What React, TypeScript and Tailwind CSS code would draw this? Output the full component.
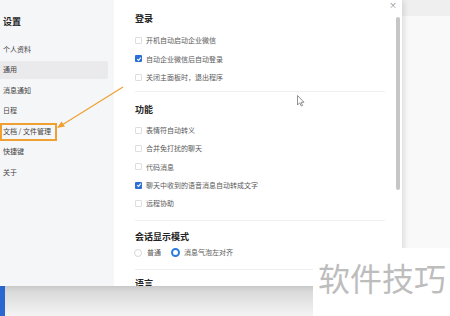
import React from 'react';

const font = { fontFamily: '"Noto Sans CJK SC", "Noto Sans", sans-serif' };

const navItems = ['个人资料', '通用', '消息通知', '日程', '文档 / 文件管理', '快捷键', '关于'];

function Check({ checked }: { checked?: boolean }) {
  if (checked) {
    return (
      <span className="flex h-[7px] w-[7px] items-center justify-center rounded-[1px] bg-[#2b6fd6]">
        <svg width="6" height="6" viewBox="0 0 10 10">
          <path d="M2 5.2 L4.2 7.3 L8 2.8" fill="none" stroke="#fff" strokeWidth="1.8" />
        </svg>
      </span>
    );
  }
  return <span className="h-[7px] w-[7px] rounded-[1px] border border-[#dedede] bg-white" />;
}

function Row({ label, checked }: { label: string; checked?: boolean }) {
  return (
    <div className="flex items-center gap-[4px]">
      <Check checked={checked} />
      <span className="text-[7px] text-[#5a5a5a]">{label}</span>
    </div>
  );
}

function Heading({ children }: { children: React.ReactNode }) {
  return <div className="flex h-[14px] items-center text-[9px] font-bold text-[#222]">{children}</div>;
}

export default function App() {
  return (
    <div className="relative flex h-[316px] w-[450px] flex-col overflow-hidden bg-[#f7f7f7]" style={font}>
      <div className="flex h-[286px]">
        {/* dialog */}
        <div className="relative flex w-[402px] overflow-hidden shadow-[2px_0_6px_rgba(0,0,0,0.12)]">
          <div className="w-[114px] bg-[#f5f6f8] pt-[15px]">
            <div className="flex h-[14px] items-center pl-[3px] text-[9px] font-bold text-[#222]">设置</div>
            <div className="mt-[9.75px] flex flex-col">
              {navItems.map((n) => (
                <div key={n} className="flex h-[20.5px] items-center">
                  <div
                    className={`flex h-[18px] w-[108px] items-center rounded-r-[2px] pl-[3px] text-[7px] text-[#444] ${
                      n === '通用' ? 'bg-[#eaeaec]' : ''
                    }`}
                  >
                    {n}
                  </div>
                </div>
              ))}
            </div>
          </div>

          <div className="flex-1 bg-white pl-[21px] pr-[17px] pt-[12px]">
            <Heading>登录</Heading>
            <div className="mt-[5px] flex flex-col">
              {[
                ['开机自动启动企业微信', false],
                ['自动企业微信后自动登录', true],
                ['关闭主面板时，退出程序', false],
              ].map(([l, c]) => (
                <div key={l as string} className="flex h-[18.5px] items-center">
                  <Row label={l as string} checked={c as boolean} />
                </div>
              ))}
            </div>
            <div className="mt-[4.5px] border-t border-[#efefef]" />

            <div className="mt-[10.5px]">
              <Heading>功能</Heading>
            </div>
            <div className="mt-[4.75px] flex flex-col">
              {[
                ['表情符自动转义', false],
                ['合并免打扰的聊天', false],
                ['代码消息', false],
                ['聊天中收到的语音消息自动转成文字', true],
                ['远程协助', false],
              ].map(([l, c]) => (
                <div key={l as string} className="flex h-[18.25px] items-center">
                  <Row label={l as string} checked={c as boolean} />
                </div>
              ))}
            </div>
            <div className="mt-[7px] border-t border-[#efefef]" />

            <div className="mt-[9px]">
              <Heading>会话显示模式</Heading>
            </div>
            <div className="mt-[2px] flex h-[14px] items-center text-[7px] text-[#5a5a5a]">
              <span className="ml-[-1px] h-[8px] w-[8px] rounded-full border border-[#d8d8d8]" />
              <span className="ml-[5px]">普通</span>
              <span className="ml-[10px] h-[9px] w-[9px] rounded-full border-[2.5px] border-[#2b7ce0] bg-white" />
              <span className="ml-[4px]">消息气泡左对齐</span>
            </div>
            <div className="mt-[9px] border-t border-[#efefef]" />
            <div className="mt-[7px]">
              <Heading>语言</Heading>
            </div>
          </div>

          {/* close + scrollbar */}
          <span className="absolute right-[5px] top-[1px] text-[8px] leading-none text-[#888]">×</span>
          <div className="absolute right-[2px] top-[17px] h-[173px] w-[4px] rounded-full bg-[#c6c6c6]" />
        </div>

        {/* window behind, right side */}
        <div className="flex flex-1 flex-col">
          <div className="h-[16px] bg-[#efefef]" />
          <div className="flex-1 bg-[#f9f9f9]" />
        </div>
      </div>

      {/* bottom strip */}
      <div className="flex flex-1">
        <div className="w-[5px] bg-[#2a68cf]" />
        <div className="flex-1 bg-gradient-to-b from-[#d4d4d4] to-[#f4f4f4]" />
      </div>

      {/* annotation: orange box + arrow */}
      <div className="absolute left-0 top-[123px] h-[18px] w-[57px] border-2 border-[#f0a032]" />
      <svg className="absolute left-0 top-0" width="450" height="316">
        <line x1="123" y1="87" x2="62" y2="125" stroke="#f0a032" strokeWidth="1.2" />
        <path d="M57 128 L61.5 121.5 L65 126.5 Z" fill="#f0a032" />
        {/* mouse cursor */}
        <path
          d="M297.5 95.5 L297.5 105 L299.7 102.8 L301.2 106 L302.6 105.4 L301.1 102.3 L304 102.3 Z"
          fill="#fff"
          stroke="#666"
          strokeWidth="0.7"
        />
      </svg>

      {/* watermark */}
      <div className="absolute left-[313px] top-[248px] flex h-[68px] w-[137px] items-start bg-white pl-[5px] pt-[13px]">
        <span className="text-[32px] leading-none text-[#bdbdbd]">软件技巧</span>
      </div>
    </div>
  );
}
